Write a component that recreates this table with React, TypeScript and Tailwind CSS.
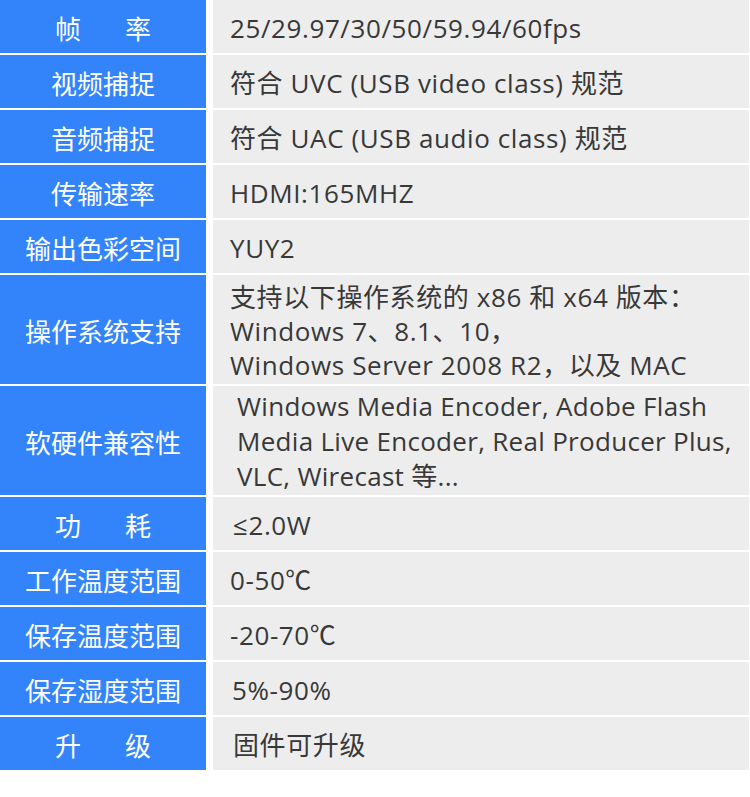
const rows: { label: React.ReactNode; lines: string[]; tall?: boolean; big?: boolean; indent?: string }[] = [
  { label: <Spread a="帧" b="率" />, lines: ['25/29.97/30/50/59.94/60fps'] },
  { label: '视频捕捉', lines: ['符合 UVC (USB video class) 规范'] },
  { label: '音频捕捉', lines: ['符合 UAC (USB audio class) 规范'] },
  { label: '传输速率', lines: ['HDMI:165MHZ'] },
  { label: '输出色彩空间', lines: ['YUY2'] },
  {
    label: '操作系统支持',
    lines: ['支持以下操作系统的 x86 和 x64 版本：', 'Windows 7、8.1、10，', 'Windows Server 2008 R2，以及 MAC'],
    tall: true,
  },
  {
    label: '软硬件兼容性',
    lines: ['Windows Media Encoder, Adobe Flash', 'Media Live Encoder, Real Producer Plus,', 'VLC, Wirecast 等...'],
    tall: true,
    big: true,
    indent: 'pl-[24px]',
  },
  { label: <Spread a="功" b="耗" />, lines: ['≤2.0W'], indent: 'pl-[20px]' },
  { label: '工作温度范围', lines: ['0-50℃'] },
  { label: '保存温度范围', lines: ['-20-70℃'] },
  { label: '保存湿度范围', lines: ['5%-90%'], indent: 'pl-[19px]' },
  { label: <Spread a="升" b="级" />, lines: ['固件可升级'], indent: 'pl-[20px]' },
];

function Spread({ a, b }: { a: string; b: string }) {
  return (
    <span className="flex">
      <span>{a}</span>
      <span className="ml-[44px]">{b}</span>
    </span>
  );
}

export default function App() {
  return (
    <div className="w-[750px] h-[797px] bg-white font-['Open_Sans','Noto_Sans_CJK_SC',sans-serif]">
      <div className="flex flex-col gap-[2px] w-[749px]">
        {rows.map((row, i) => (
          <div key={i} className={`flex ${row.tall ? 'h-[109px]' : 'h-[53px]'}`}>
            <div className="w-[206px] shrink-0 bg-[#3384fb] flex items-center justify-center text-white text-[26px] font-['Noto_Sans_CJK_SC',sans-serif] pt-[2px]">
              {row.label}
            </div>
            <div
              className={`ml-[7px] flex-1 bg-[#ededed] flex flex-col justify-center text-[#383838] text-[26px] ${
                row.big ? 'leading-[35px] tracking-[0.3px]' : 'leading-[34px] tracking-[0.6px]'
              } ${row.indent ?? 'pl-[17px]'} pt-[2px]`}
            >
              {row.lines.map((l, j) => (
                <div key={j} className="whitespace-nowrap">
                  {l}
                </div>
              ))}
            </div>
          </div>
        ))}
      </div>
    </div>
  );
}
